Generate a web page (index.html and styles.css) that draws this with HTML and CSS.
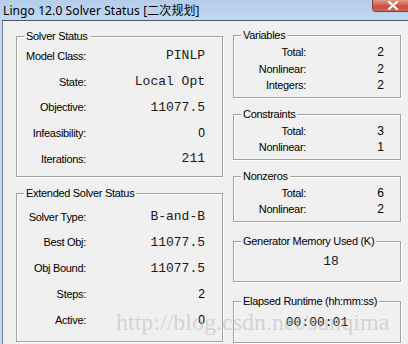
FILE: index.html
```html
<!DOCTYPE html>
<html lang="zh-CN">
<head>
    <meta charset="UTF-8">
    <title>Lingo 12.0 Solver Status</title>
    <link rel="stylesheet" href="styles.css">
</head>
<body>
    <div class="window">
        <div class="titlebar">
            <span class="title">Lingo 12.0 Solver Status [二次规划]</span>
            <span class="close">
                <svg width="12" height="9" viewBox="0 0 12 9"><path d="M2 1 L10 8 M10 1 L2 8" stroke="#fff" stroke-width="2.2" stroke-linecap="round"/></svg>
            </span>
        </div>
        <div class="frame">
            <div class="client">
                <div class="col-left">
                    <div class="group big">
                        <span class="group-title">Solver Status</span>
                        <span class="label">Model Class:</span><span class="value mono">PINLP</span>
                        <span class="label">State:</span><span class="value mono">Local Opt</span>
                        <span class="label">Objective:</span><span class="value mono">11077.5</span>
                        <span class="label">Infeasibility:</span><span class="value">0</span>
                        <span class="label">Iterations:</span><span class="value mono">211</span>
                    </div>
                    <div class="group big ext">
                        <span class="group-title">Extended Solver Status</span>
                        <span class="label">Solver Type:</span><span class="value mono">B-and-B</span>
                        <span class="label">Best Obj:</span><span class="value mono">11077.5</span>
                        <span class="label">Obj Bound:</span><span class="value mono">11077.5</span>
                        <span class="label">Steps:</span><span class="value">2</span>
                        <span class="label">Active:</span><span class="value">0</span>
                    </div>
                </div>
                <div class="col-right">
                    <div class="group small">
                        <span class="group-title">Variables</span>
                        <span class="label">Total:</span><span class="value">2</span>
                        <span class="label">Nonlinear:</span><span class="value">2</span>
                        <span class="label">Integers:</span><span class="value">2</span>
                    </div>
                    <div class="group small">
                        <span class="group-title">Constraints</span>
                        <span class="label">Total:</span><span class="value">3</span>
                        <span class="label">Nonlinear:</span><span class="value">1</span>
                    </div>
                    <div class="group small">
                        <span class="group-title">Nonzeros</span>
                        <span class="label">Total:</span><span class="value">6</span>
                        <span class="label">Nonlinear:</span><span class="value">2</span>
                    </div>
                    <div class="group single memory">
                        <span class="group-title">Generator Memory Used (K)</span>
                        <span class="value mono">18</span>
                    </div>
                    <div class="group single runtime">
                        <span class="group-title">Elapsed Runtime (hh:mm:ss)</span>
                        <span class="value mono">00:00:01</span>
                    </div>
                </div>
            </div>
        </div>
        <div class="watermark">http://blog.csdn.net/sunqima</div>
    </div>
</body>
</html>
```

FILE: styles.css
```css
/* Reset */
* {
    margin: 0;
    padding: 0;
    box-sizing: border-box;
}
body {
    width: 408px;
    height: 344px;
    overflow: hidden;
    background: #f0f0f0;
    font-family: 'Liberation Sans', Arial, sans-serif;
    color: #000;
}
.window {
    position: relative;
    height: 344px;
}

/* Title bar */
.titlebar {
    position: relative;
    height: 20px;
    background: linear-gradient(#b4cdeb, #c2d7ef);
    padding-left: 3px;
    line-height: 19px;
}
.title {
    font-family: 'Noto Sans', 'Noto Sans CJK SC', sans-serif;
    font-size: 12px;
    letter-spacing: 0.1px;
}
.close {
    position: absolute;
    top: 0;
    left: 372px;
    width: 43px;
    height: 12px;
    border: 1px solid #8a3a30;
    border-top: none;
    border-radius: 0 0 4px 4px;
    background: linear-gradient(#e39a88, #c9503c 60%, #d06a52);
    display: flex;
    justify-content: center;
    align-items: center;
    padding-right: 2px;
}

/* Window frame */
.frame {
    height: 324px;
    padding-left: 2px;
    background: #c6d8ee;
}
.client {
    height: 100%;
    border-left: 1px solid #6f7f92;
    border-top: 1px solid #4a5666;
    background: #f0f0f0;
    display: flex;
    gap: 10px;
    padding: 14px 0 0 13px;
}
.col-left {
    width: 207px;
    display: flex;
    flex-direction: column;
    gap: 16px;
    padding-top: 1px;
}
.col-right {
    width: 168px;
    display: flex;
    flex-direction: column;
}

/* Group boxes */
.group {
    position: relative;
    border: 1px solid #a0a0a0;
    box-shadow: 1px 1px 0 #fff, inset 1px 1px 0 #fff;
    display: grid;
    align-items: center;
}
.group-title {
    position: absolute;
    top: -8px;
    left: 7px;
    padding: 0 2px;
    background: #f0f0f0;
    font-size: 11px;
    letter-spacing: -0.3px;
    line-height: 15px;
}
.label {
    font-size: 11px;
    letter-spacing: -0.3px;
    text-align: right;
    white-space: nowrap;
}
.value {
    font-size: 12px;
    text-align: right;
}
.mono {
    font-family: 'Liberation Mono', 'Courier New', monospace;
    font-size: 13px;
    color: #1a1a1a;
}

.big {
    grid-template-columns: 69px 1fr;
    grid-auto-rows: 25.75px;
    padding: 6px 17px 4px 0;
}
.ext {
    padding: 10px 17px 8px 0;
}
.small {
    grid-template-columns: 72px 1fr;
    grid-auto-rows: 16.5px;
    padding: 8px 16px 3px 0;
    margin-bottom: 16px;
}
.single {
    grid-template-columns: 1fr;
    grid-auto-rows: 16px;
}
.single .value {
    text-align: center;
}
.memory {
    margin-top: 3px;
    padding: 12px 0 11px 28px;
}
.runtime {
    margin-top: 19px;
    padding: 13px 0 11px 0;
}

/* Blog watermark */
.watermark {
    position: absolute;
    left: 116px;
    top: 309px;
    font-family: 'Liberation Serif', 'Times New Roman', serif;
    font-size: 24px;
    color: rgba(175, 175, 175, 0.45);
    white-space: nowrap;
}
```
